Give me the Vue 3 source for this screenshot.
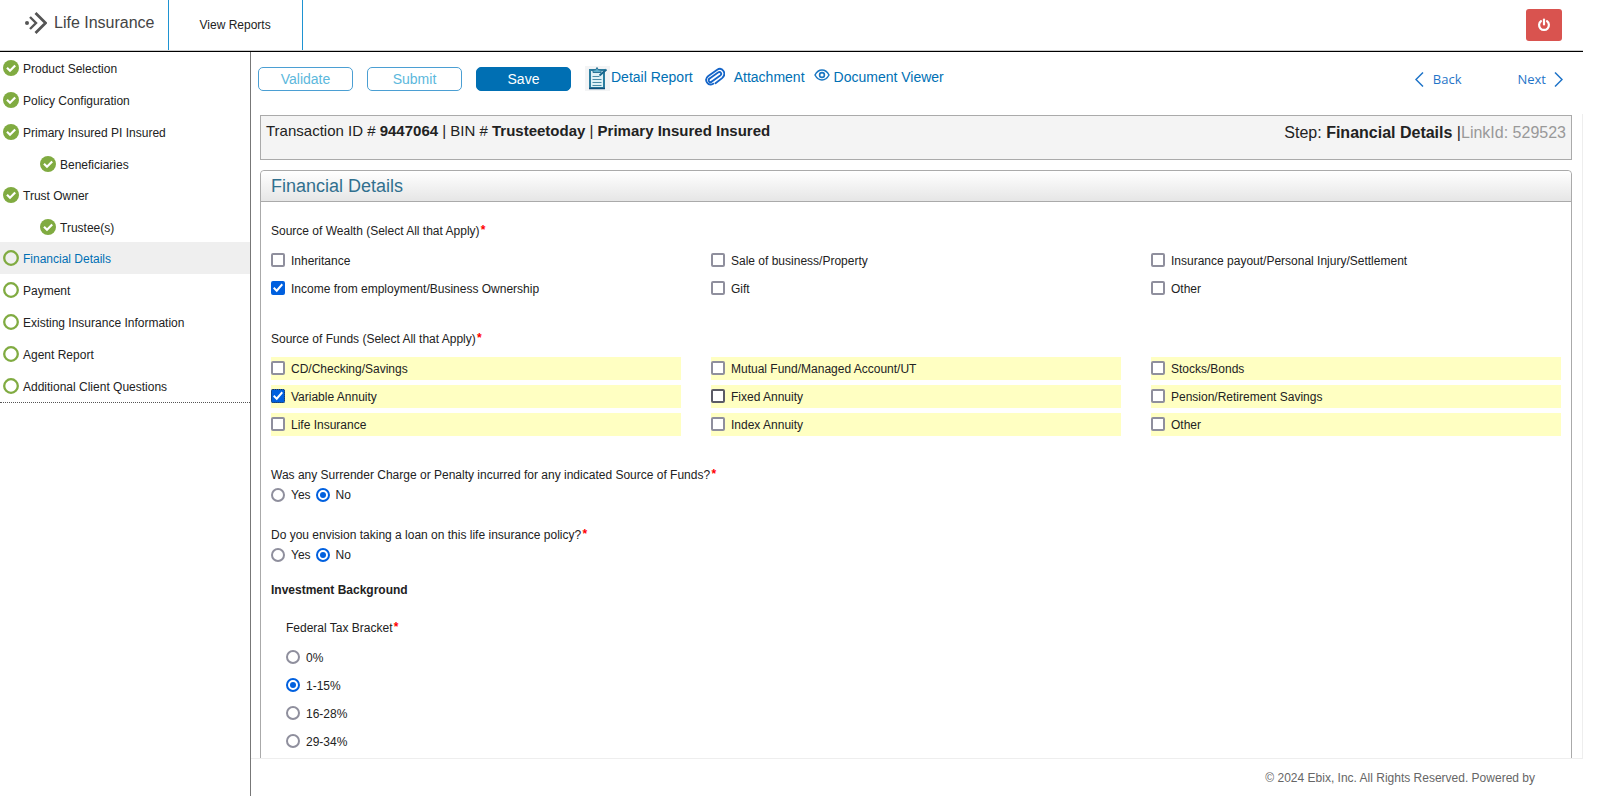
<script setup>
import { reactive } from 'vue'

const steps = [
  { label: 'Product Selection', done: true },
  { label: 'Policy Configuration', done: true },
  { label: 'Primary Insured PI Insured', done: true },
  { label: 'Beneficiaries', done: true, child: true },
  { label: 'Trust Owner', done: true },
  { label: 'Trustee(s)', done: true, child: true },
  { label: 'Financial Details', active: true },
  { label: 'Payment' },
  { label: 'Existing Insurance Information' },
  { label: 'Agent Report' },
  { label: 'Additional Client Questions' },
]

const wealth = reactive([
  { label: 'Inheritance', checked: false },
  { label: 'Sale of business/Property', checked: false },
  { label: 'Insurance payout/Personal Injury/Settlement', checked: false },
  { label: 'Income from employment/Business Ownership', checked: true },
  { label: 'Gift', checked: false },
  { label: 'Other', checked: false },
])

const funds = reactive([
  { label: 'CD/Checking/Savings', checked: false },
  { label: 'Mutual Fund/Managed Account/UT', checked: false },
  { label: 'Stocks/Bonds', checked: false },
  { label: 'Variable Annuity', checked: true, state: 'focused' },
  { label: 'Fixed Annuity', checked: false, state: 'hovered' },
  { label: 'Pension/Retirement Savings', checked: false },
  { label: 'Life Insurance', checked: false },
  { label: 'Index Annuity', checked: false },
  { label: 'Other', checked: false },
])

const yesNo = ['Yes', 'No']
const brackets = ['0%', '1-15%', '16-28%', '29-34%']
const answers = reactive({ surrender: 'No', loan: 'No', bracket: '1-15%' })
</script>

<template>
  <div class="page">
    <header class="top">
      <div class="brand">
        <svg width="22" height="22" viewBox="0 0 22 22" fill="none" stroke="#555">
          <circle cx="2" cy="11" r="2" fill="#555" stroke="none" />
          <path d="M5 5l6 6-6 6" stroke-width="2.400" />
          <path d="M10.500 1l10 10-10 10" stroke-width="2.700" />
        </svg>
        <span>Life Insurance</span>
      </div>
      <a class="reports" href="#">View Reports</a>
      <button class="power" type="button" aria-label="Log out">
        <svg width="14" height="14" viewBox="0 0 14 14" fill="none" stroke="#fff" stroke-width="2.200" stroke-linecap="round">
          <path d="M7 1.500v5" />
          <path d="M4 3.200a4.900 4.900 0 1 0 6 0" />
        </svg>
      </button>
    </header>

    <div class="body">
      <nav class="side">
        <ul>
          <li v-for="s in steps" :key="s.label" :class="{ child: s.child, active: s.active }">
            <svg width="16" height="16" viewBox="0 0 16 16">
              <template v-if="s.done">
                <circle cx="8" cy="8" r="8" fill="#80ab41" />
                <path d="M4 7.800l3 3 5.200-5.300" fill="none" stroke="#fff" stroke-width="2.200" />
              </template>
              <circle v-else cx="8" cy="8" r="6.800" fill="none" stroke="#80ab41" stroke-width="2.300" />
            </svg>
            <a href="#">{{ s.label }}</a>
          </li>
        </ul>
      </nav>

      <main>
        <div class="toolbar">
          <button class="btn" type="button">Validate</button>
          <button class="btn" type="button">Submit</button>
          <button class="btn primary" type="button">Save</button>
          <a class="tool report" href="#">
            <svg width="25" height="25" viewBox="0 0 25 25" fill="none">
              <rect width="25" height="25" fill="#f3f4f5" />
              <rect x="5" y="4" width="14" height="18" fill="#dff1f6" stroke="#2b7d9f" stroke-width="2" />
              <path d="M4 22.500h16" stroke="#124f78" stroke-width="1.500" />
              <path d="M8 6.500V4h2.500L12 1.500 13.500 4H16v2.500z" fill="#5fb0cc" stroke="#2b7395" />
              <path d="M7.500 10.500h7M7.500 13.500h9M7.500 16.500h9M7.500 19.500h9" stroke="#4b8ca6" />
              <path d="M14.500 9.500l7-6" stroke="#17658c" stroke-width="2" />
            </svg>
            <span>Detail Report</span>
          </a>
          <a class="tool attach" href="#">
            <svg width="20" height="20" viewBox="0 0 20 20" fill="none" stroke="#1565c8" stroke-width="1.800" stroke-linecap="round">
              <path d="M6.500 14.800l8.700-6.300c2.300-1.800.2-4.600-2.200-3L4.300 11.700" />
              <path d="M4.300 11.700c-1.800 1.700.2 4.400 2.200 3.100" />
              <path d="M10.500 16.300l6.600-5.200c5-4.500.4-11.700-5.300-8.200L3.300 9c-5 4-.2 10.500 5 7.700" />
            </svg>
            <span>Attachment</span>
          </a>
          <a class="tool viewer" href="#">
            <svg width="16" height="12" viewBox="0 0 16 12" fill="none" stroke="#1976c2">
              <path d="M1 6c3.500-6.600 10.500-6.600 14 0-3.500 6.600-10.500 6.600-14 0z" stroke-width="1.500" />
              <circle cx="8" cy="6" r="2.400" stroke-width="1.600" />
            </svg>
            <span>Document Viewer</span>
          </a>
          <div class="pager">
            <a href="#">
              <svg width="9" height="15" viewBox="0 0 9 15" fill="none" stroke="#1f74c8" stroke-width="1.500"><path d="M8 .5l-7 7 7 7" /></svg>
              Back
            </a>
            <a class="next" href="#">
              Next
              <svg width="9" height="15" viewBox="0 0 9 15" fill="none" stroke="#1f74c8" stroke-width="1.500"><path d="M1 .5l7 7-7 7" /></svg>
            </a>
          </div>
        </div>

        <div class="scroll">
          <section class="summary">
            <div>Transaction ID # <b>9447064</b> | BIN # <b>Trusteetoday</b> | <b>Primary Insured Insured</b></div>
            <div class="step">Step: <b>Financial Details</b> |<span>LinkId: 529523</span></div>
          </section>

          <form class="panel">
            <h1>Financial Details</h1>
            <fieldset>
              <legend>Source of Wealth (Select All that Apply)<i>*</i></legend>
              <div class="options">
                <label v-for="o in wealth" :key="o.label">
                  <input v-model="o.checked" type="checkbox" />{{ o.label }}
                </label>
              </div>
            </fieldset>
            <fieldset class="funds">
              <legend>Source of Funds (Select All that Apply)<i>*</i></legend>
              <div class="options">
                <label v-for="o in funds" :key="o.label">
                  <input v-model="o.checked" type="checkbox" :class="o.state" />{{ o.label }}
                </label>
              </div>
            </fieldset>
            <fieldset class="question">
              <legend>Was any Surrender Charge or Penalty incurred for any indicated Source of Funds?<i>*</i></legend>
              <div class="inline">
                <label v-for="o in yesNo" :key="o">
                  <input v-model="answers.surrender" type="radio" name="surrender" :value="o" />{{ o }}
                </label>
              </div>
            </fieldset>
            <fieldset class="question">
              <legend>Do you envision taking a loan on this life insurance policy?<i>*</i></legend>
              <div class="inline">
                <label v-for="o in yesNo" :key="o">
                  <input v-model="answers.loan" type="radio" name="loan" :value="o" />{{ o }}
                </label>
              </div>
            </fieldset>
            <h2>Investment Background</h2>
            <fieldset class="bracket">
              <legend>Federal Tax Bracket<i>*</i></legend>
              <div class="stack">
                <label v-for="o in brackets" :key="o">
                  <input v-model="answers.bracket" type="radio" name="bracket" :value="o" />{{ o }}
                </label>
              </div>
            </fieldset>
          </form>
        </div>

        <footer>© 2024 Ebix, Inc. All Rights Reserved. Powered by</footer>
      </main>
    </div>
  </div>
</template>

<style>
body {
  margin: 0;
  background: #fff;
}
</style>

<style scoped>
* {
  box-sizing: border-box;
}
.page {
  display: flex;
  flex-direction: column;
  height: 100vh;
  padding-right: 17px;
  overflow: hidden;
  color: #222;
  font: 12px/16px "Liberation Sans", Arial, sans-serif;
}
a {
  color: inherit;
  text-decoration: none;
}
button {
  font: inherit;
  cursor: pointer;
}
.top {
  display: flex;
  flex: none;
  height: 52px;
  padding-right: 21px;
  border-bottom: 1px solid #000;
  box-shadow: inset 0 -1px #ccc;
}
.brand {
  display: flex;
  align-items: center;
  gap: 7px;
  height: 50px;
  padding: 0 13px 4px 25px;
  border-right: 1px solid #1e93d2;
  color: #444;
  font-size: 16px;
}
.reports {
  height: 50px;
  padding: 17px 31px 0;
  border-right: 1px solid #1e93d2;
}
.power {
  display: flex;
  align-items: center;
  justify-content: center;
  width: 36px;
  height: 32px;
  margin: 9px 0 0 auto;
  padding: 0;
  border: 0;
  border-radius: 3px;
  background: #d9534f;
}
.body {
  display: flex;
  flex: 1;
  min-height: 0;
}
.side {
  flex: none;
  width: 251px;
  border-right: 1px solid #777;
}
.side ul {
  margin: 0;
  padding: 0;
  border-bottom: 1px dotted #555;
  list-style: none;
}
.side li {
  display: flex;
  align-items: center;
  gap: 4px;
  height: 32px;
  padding-left: 3px;
}
.side a {
  padding-top: 2px;
}
.side .child {
  height: 31px;
  padding-left: 40px;
}
.side .active {
  background: #efefef;
  color: #0070b4;
}
main {
  display: flex;
  flex: 1;
  flex-direction: column;
  min-width: 0;
}
.toolbar {
  display: flex;
  flex: none;
  height: 62px;
  padding: 15px 20px 0 7px;
  font-size: 14px;
}
.btn {
  width: 95px;
  height: 24px;
  margin-right: 14px;
  padding: 0;
  border: 1px solid #4b9fd3;
  border-radius: 5px;
  background: #fff;
  color: #5cb8dc;
}
.primary {
  border-color: #006fb3;
  background: #006fb3;
  color: #fff;
}
.tool {
  display: flex;
  height: 24px;
  color: #0070b4;
  line-height: 20px;
}
.report {
  gap: 1px;
}
.report svg {
  margin-top: -1px;
}
.attach {
  gap: 9px;
  margin-left: 12px;
}
.viewer {
  gap: 4px;
  margin-left: 9px;
}
.viewer svg {
  margin-top: 2px;
}
.pager {
  display: flex;
  gap: 56px;
  height: 24px;
  margin-left: auto;
  color: #1f74c8;
  font: 13px/24px "Open Sans", sans-serif;
}
.pager a {
  display: flex;
  align-items: center;
  gap: 9px;
}
.pager .next {
  gap: 8px;
}
.scroll {
  flex: 1;
  min-height: 0;
  padding: 1px 10px 0 9px;
  overflow: hidden;
  border: solid #eee;
  border-width: 0 1px 1px 0;
}
.summary {
  display: flex;
  justify-content: space-between;
  height: 45px;
  margin-bottom: 10px;
  padding: 7px 5px;
  border: 1px solid #aaa;
  background: #f4f4f4;
  font-size: 15px;
}
.step {
  padding-top: 2px;
  font-size: 16px;
}
.step span {
  color: #999;
}
.panel {
  padding-bottom: 20px;
  border: 1px solid #aaa;
  border-radius: 4px 4px 0 0;
}
h1 {
  height: 31px;
  margin: 0 0 21px;
  padding: 0 10px;
  border-bottom: 1px solid #aaa;
  border-radius: 4px 4px 0 0;
  background: linear-gradient(#fff, #e6e6e6);
  color: #31708f;
  font-size: 18px;
  font-weight: 400;
  line-height: 30px;
}
fieldset {
  min-width: 0;
  margin: 0 10px;
  padding: 0;
  border: 0;
}
legend {
  height: 16px;
  padding: 0;
}
legend i {
  color: #f00;
  font: bold 12px/12px "Liberation Mono", monospace;
  vertical-align: 1px;
}
.options {
  display: grid;
  grid-template-columns: repeat(3, 1fr);
  gap: 5px 30px;
  padding-top: 10px;
}
label {
  display: flex;
  align-items: flex-start;
  gap: 6px;
  height: 23px;
  line-height: 24px;
}
.funds {
  margin-top: 31px;
}
.funds label {
  background: #ffffc2;
}
input {
  flex: none;
  appearance: none;
  position: relative;
  width: 14px;
  height: 14px;
  margin: 4px 0 0;
  border: 2px solid #8f8f9d;
  border-radius: 2px;
  background: #fff;
}
input[type="checkbox"]:checked {
  border-color: #0060df;
  background: #0060df;
}
input[type="checkbox"]:checked::after {
  position: absolute;
  inset: 0;
  background: #fff;
  clip-path: polygon(0 54%, 14% 40%, 36% 62%, 86% 6%, 100% 20%, 38% 92%);
  content: "";
}
input.focused {
  outline: 1px dotted #333;
  outline-offset: -1px;
}
input.hovered {
  border-color: #5b5b66;
}
input[type="radio"] {
  border-radius: 50%;
}
input[type="radio"]:checked {
  border-color: #0060df;
}
input[type="radio"]:checked::after {
  position: absolute;
  inset: 2px;
  border-radius: 50%;
  background: #0060df;
  content: "";
}
.question {
  margin-top: 31px;
}
.question + .question {
  margin-top: 21px;
}
.inline {
  display: flex;
  gap: 5px;
}
.inline input {
  margin-top: 5px;
}
h2 {
  margin: 16px 10px 22px;
  font-size: 12px;
  line-height: 16px;
}
.bracket {
  margin-left: 25px;
}
.stack {
  display: grid;
  gap: 5px;
  padding-top: 10px;
}
footer {
  flex: none;
  height: 37px;
  padding: 11px 48px 0 0;
  color: #666;
  text-align: right;
}
</style>
